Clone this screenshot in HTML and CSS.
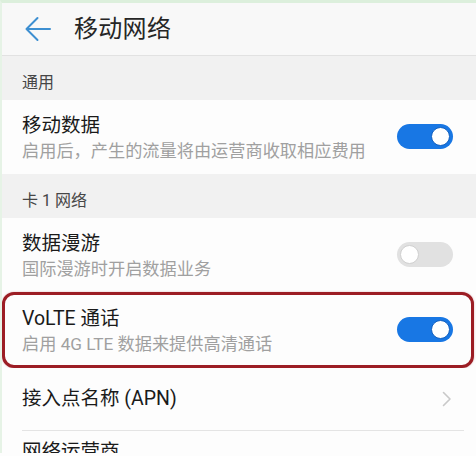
FILE: index.html
```html
<!DOCTYPE html>
<html lang="zh">
<head>
<meta charset="utf-8">
<title>移动网络</title>
<link rel="stylesheet" href="styles.css">
</head>
<body>
<div class="screen">
  <header class="topbar">
    <svg class="back" viewBox="0 0 26 26" width="26" height="26">
      <path d="M1.5 13 H25 M12.5 2 L1.5 13 L12.5 24" fill="none" stroke="#3d8fd1" stroke-width="2" stroke-linecap="round" stroke-linejoin="round"/>
    </svg>
    <h1 class="title">移动网络</h1>
  </header>

  <div class="section">通用</div>
  <div class="row">
    <div class="texts">
      <div class="name">移动数据</div>
      <div class="desc">启用后，产生的流量将由运营商收取相应费用</div>
    </div>
    <span class="toggle on"><span class="knob"></span></span>
  </div>

  <div class="section">卡 1 网络</div>
  <div class="row">
    <div class="texts">
      <div class="name">数据漫游</div>
      <div class="desc">国际漫游时开启数据业务</div>
    </div>
    <span class="toggle off"><span class="knob"></span></span>
  </div>

  <div class="row highlight">
    <div class="texts">
      <div class="name">VoLTE 通话</div>
      <div class="desc">启用 4G LTE 数据来提供高清通话</div>
    </div>
    <span class="toggle on"><span class="knob"></span></span>
  </div>

  <div class="row link">
    <div class="name">接入点名称 (APN)</div>
    <svg class="chevron" viewBox="0 0 10 16" width="10" height="16">
      <path d="M1.5 1.5 L8 8 L1.5 14.5" fill="none" stroke="#c9c9c9" stroke-width="1.6" stroke-linecap="round" stroke-linejoin="round"/>
    </svg>
  </div>
  <div class="row link last">
    <div class="name">网络运营商</div>
  </div>
</div>
</body>
</html>
```

FILE: styles.css
```css
html, body {
  margin: 0;
  padding: 0;
  background: #fdfdfd;
}
body {
  font-family: Roboto, "Noto Sans CJK SC", sans-serif;
  color: #1f1f1f;
  width: 476px;
  height: 456px;
  overflow: hidden;
}
.screen {
  border-top: 3px solid #dcefdc;
  border-left: 2px solid #e6f3e6;
  height: 453px;
  overflow: hidden;
  box-sizing: border-box;
  background: #fdfdfd;
}
.topbar {
  height: 52px;
  background: #f8f8f8;
  border-bottom: 1px solid #e2e2e2;
  display: flex;
  align-items: center;
  padding-left: 23px;
  box-shadow: 0 1px 1px rgba(0,0,0,0.04);
}
.back {
  display: block;
  margin-top: -1px;
}
.title {
  margin: 0 0 0 23px;
  font-size: 24px;
  font-weight: 400;
  line-height: 30px;
  color: #262626;
  letter-spacing: 0.3px;
}
.section {
  height: 44px;
  box-sizing: border-box;
  padding: 16px 0 0 20px;
  background: #f1f1f1;
  font-size: 16px;
  line-height: 22px;
  color: #464646;
}
.row {
  height: 74px;
  box-sizing: border-box;
  display: flex;
  align-items: center;
  justify-content: space-between;
  padding: 0 23px 0 20px;
  background: #fdfdfd;
}
.texts {
  display: flex;
  flex-direction: column;
  margin-top: 2px;
}
.name {
  font-size: 19.5px;
  line-height: 26px;
  color: #1a1a1a;
}
.desc {
  font-size: 17.2px;
  line-height: 24px;
  color: #a0a0a0;
}
.toggle {
  width: 56px;
  height: 25px;
  border-radius: 13px;
  position: relative;
  flex: none;
  margin-top: -2px;
}
.toggle.on {
  background: #1877e4;
}
.toggle.off {
  background: #e1e1e1;
}
.knob {
  position: absolute;
  top: 3px;
  width: 19px;
  height: 19px;
  border-radius: 50%;
  background: #fff;
  box-sizing: border-box;
}
.toggle.on .knob {
  right: 3px;
  border: 1.5px solid #1260c0;
}
.toggle.off .knob {
  left: 3px;
  border: 1px solid #d0d0d0;
}
.highlight {
  height: 76px;
  width: 472px;
  border: 3px solid #9c1d24;
  border-radius: 12px;
  padding: 0 18px 0 17px;
  box-shadow: 0 0 2px rgba(156,29,36,0.35);
}
.highlight .texts {
  margin-top: 1px;
}
.link {
  height: 62px;
}
.chevron {
  display: block;
  margin-right: 1px;
}
.last {
  border-top: 1px solid #e4e4e4;
  margin: 0 12px 0 20px;
  padding: 8px 0 0 0;
  align-items: flex-start;
}
```
